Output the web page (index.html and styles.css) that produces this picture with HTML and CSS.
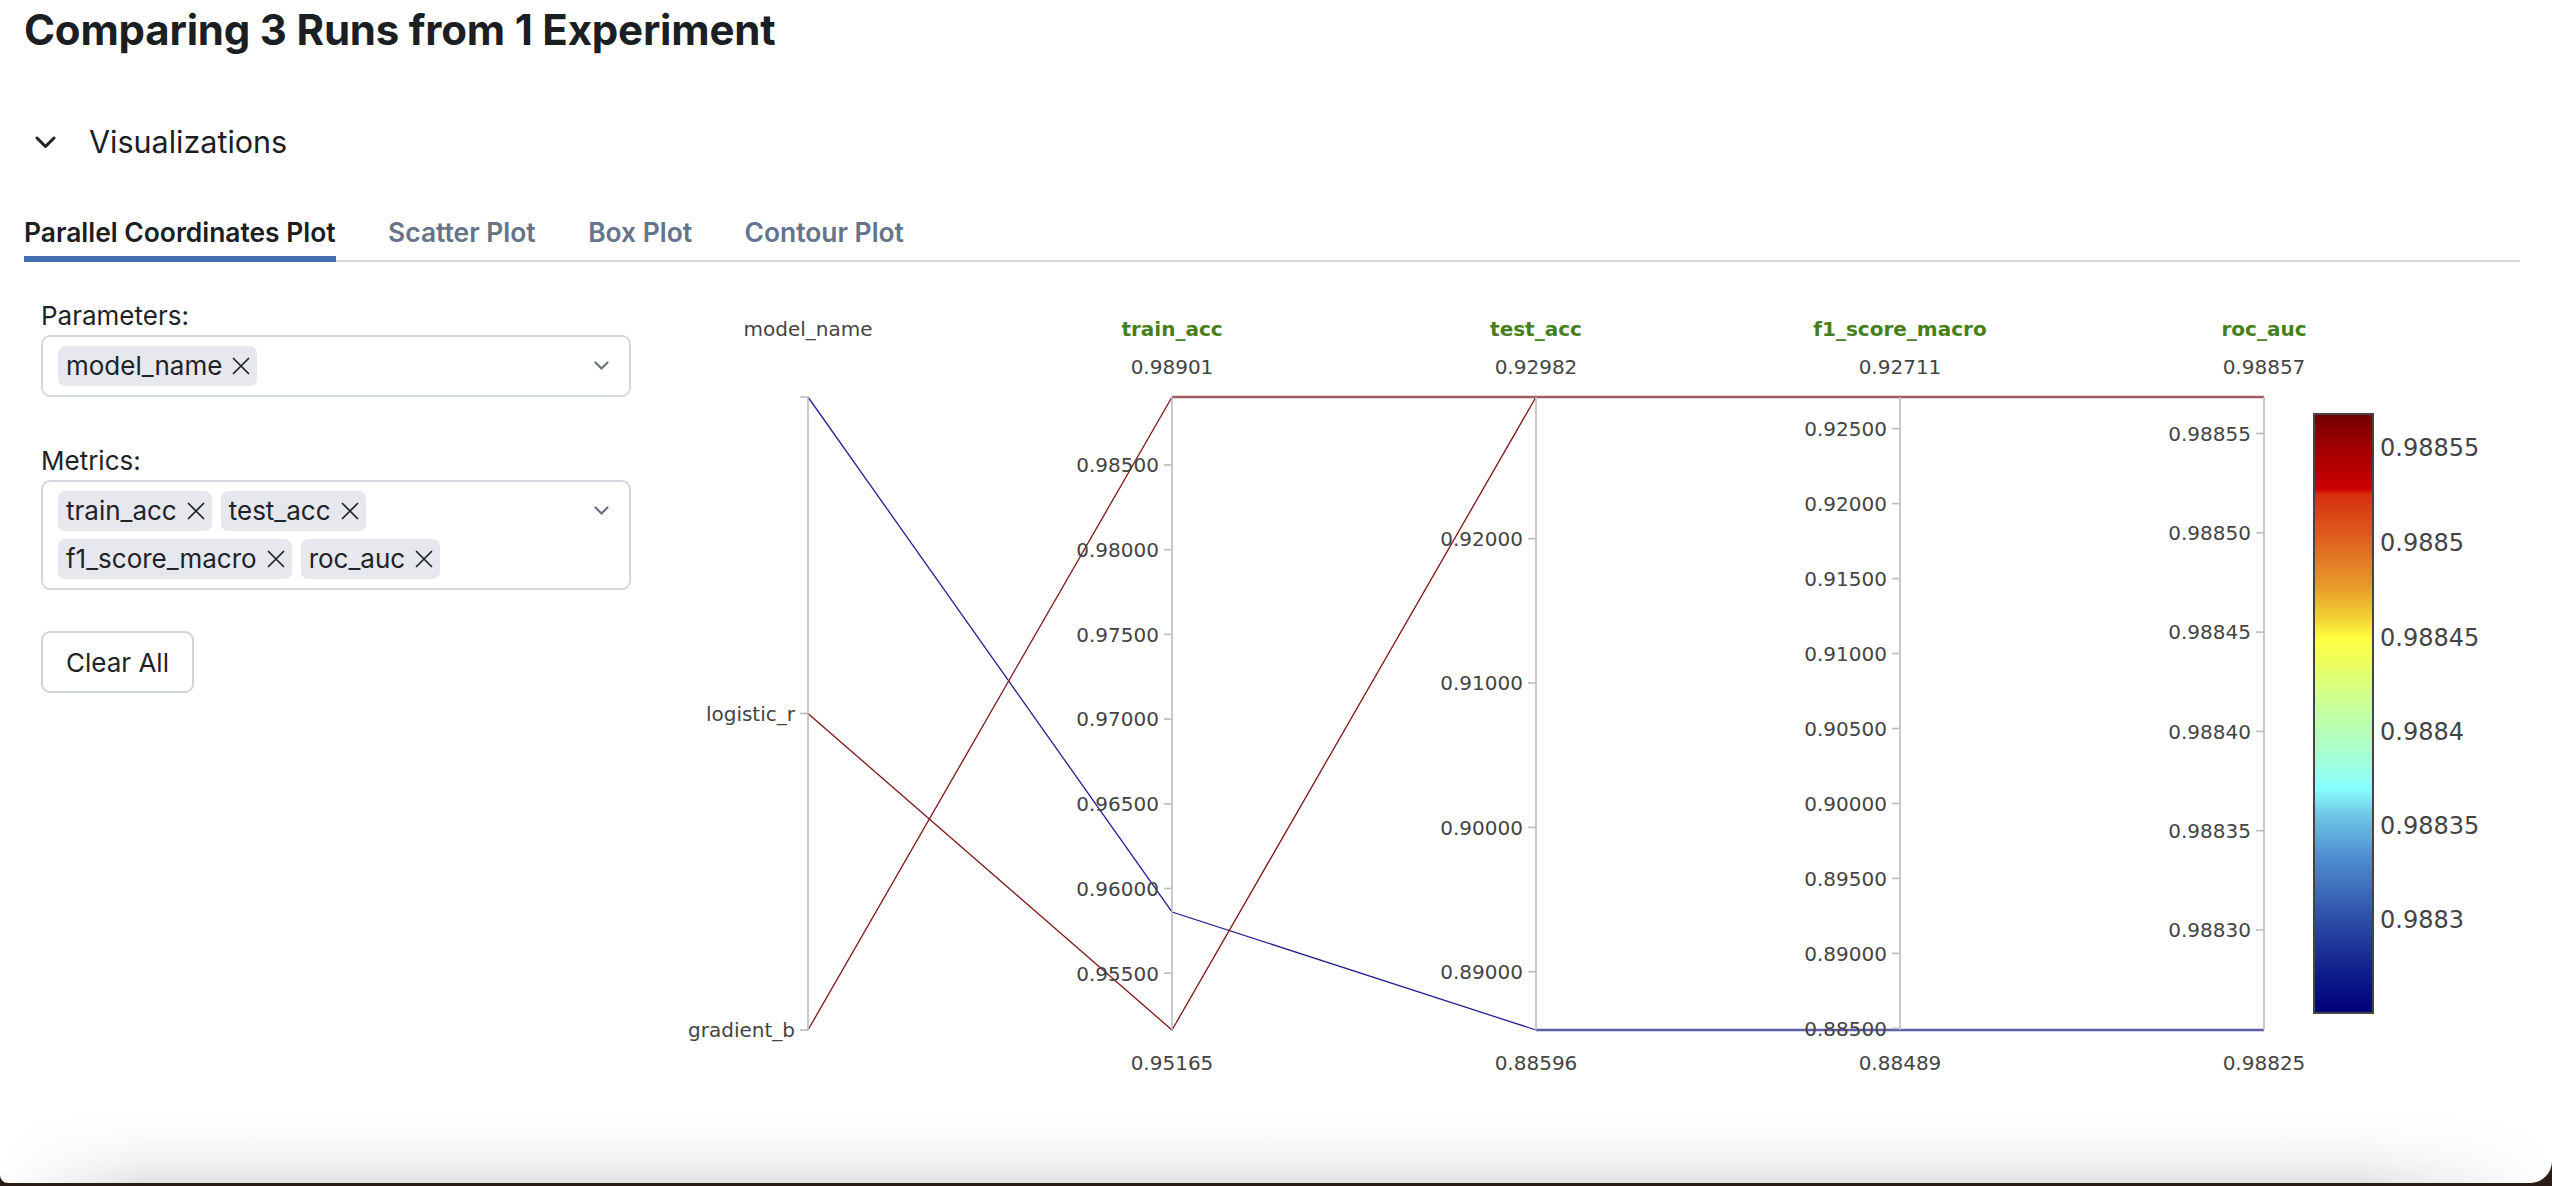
FILE: index.html
```html
<!DOCTYPE html>
<html lang="en">
<head>
<meta charset="utf-8">
<title>Comparing 3 Runs from 1 Experiment</title>
<link rel="stylesheet" href="styles.css">
</head>
<body>
<div class="window">
  <main class="page">
    <h1 class="title">Comparing 3 Runs from 1 Experiment</h1>

    <div class="section-toggle">
      <svg class="toggle-chevron" width="21" height="13" viewBox="0 0 21 13"><polyline points="2,2 10.5,10.5 19,2" fill="none" stroke="#1f2328" stroke-width="3" stroke-linecap="round" stroke-linejoin="round"/></svg>
      <span class="toggle-label">Visualizations</span>
    </div>

    <nav class="tabs">
      <div class="tab active">Parallel Coordinates Plot</div>
      <div class="tab">Scatter Plot</div>
      <div class="tab">Box Plot</div>
      <div class="tab">Contour Plot</div>
    </nav>

    <section class="tab-body">
      <div class="controls">
        <div class="field-label">Parameters:</div>
        <div class="select">
          <div class="chips">
            <span class="chip">model_name<svg class="chip-x" width="18" height="18" viewBox="0 0 18 18"><path d="M1.5 1.5L16.5 16.5M16.5 1.5L1.5 16.5" stroke="#1f2328" stroke-width="1.7" stroke-linecap="round"/></svg></span>
          </div>
          <div class="select-arrow"><svg width="15" height="9" viewBox="0 0 15 9"><polyline points="1.5,1.5 7.5,7.5 13.5,1.5" fill="none" stroke="#6b7280" stroke-width="2.2" stroke-linecap="round" stroke-linejoin="round"/></svg></div>
        </div>

        <div class="field-label second">Metrics:</div>
        <div class="select">
          <div class="chips">
            <span class="chip">train_acc<svg class="chip-x" width="18" height="18" viewBox="0 0 18 18"><path d="M1.5 1.5L16.5 16.5M16.5 1.5L1.5 16.5" stroke="#1f2328" stroke-width="1.7" stroke-linecap="round"/></svg></span>
            <span class="chip">test_acc<svg class="chip-x" width="18" height="18" viewBox="0 0 18 18"><path d="M1.5 1.5L16.5 16.5M16.5 1.5L1.5 16.5" stroke="#1f2328" stroke-width="1.7" stroke-linecap="round"/></svg></span>
            <span class="chip">f1_score_macro<svg class="chip-x" width="18" height="18" viewBox="0 0 18 18"><path d="M1.5 1.5L16.5 16.5M16.5 1.5L1.5 16.5" stroke="#1f2328" stroke-width="1.7" stroke-linecap="round"/></svg></span>
            <span class="chip">roc_auc<svg class="chip-x" width="18" height="18" viewBox="0 0 18 18"><path d="M1.5 1.5L16.5 16.5M16.5 1.5L1.5 16.5" stroke="#1f2328" stroke-width="1.7" stroke-linecap="round"/></svg></span>
          </div>
          <div class="select-arrow"><svg width="15" height="9" viewBox="0 0 15 9"><polyline points="1.5,1.5 7.5,7.5 13.5,1.5" fill="none" stroke="#6b7280" stroke-width="2.2" stroke-linecap="round" stroke-linejoin="round"/></svg></div>
        </div>

        <button class="clear-btn" type="button">Clear All</button>
      </div>

      <svg class="plot" width="1870" height="820" viewBox="650 280 1870 820">
        <defs>
          <linearGradient id="jet" x1="0" y1="0" x2="0" y2="1">
            <stop offset="0" stop-color="#700000"/>
            <stop offset="0.05" stop-color="#9c0000"/>
            <stop offset="0.125" stop-color="#cc0000"/>
            <stop offset="0.135" stop-color="#d6300e"/>
            <stop offset="0.2" stop-color="#de5a1e"/>
            <stop offset="0.28" stop-color="#e6942a"/>
            <stop offset="0.34" stop-color="#f2d032"/>
            <stop offset="0.375" stop-color="#ffff40"/>
            <stop offset="0.44" stop-color="#e0ff74"/>
            <stop offset="0.5" stop-color="#c4ffa4"/>
            <stop offset="0.56" stop-color="#aaffcc"/>
            <stop offset="0.625" stop-color="#88ffff"/>
            <stop offset="0.67" stop-color="#6ec6e6"/>
            <stop offset="0.74" stop-color="#4e8ed0"/>
            <stop offset="0.84" stop-color="#2f4fa8"/>
            <stop offset="0.94" stop-color="#0c1a88"/>
            <stop offset="1" stop-color="#000078"/>
          </linearGradient>
        </defs>

        <g class="lines" fill="none">
          <polyline class="ln-blue" points="808,397 1172,912 1536,1030"/>
          <line class="ln-blue-h" x1="1536" y1="1030" x2="2264" y2="1030"/>
          <polyline class="ln-red" points="808,713.5 1172,1030 1536,397"/>
          <polyline class="ln-red" points="808,1030 1172,397"/>
          <line class="ln-red-h" x1="1172" y1="397" x2="2264" y2="397"/>
        </g>

        <g class="axes">
          <line x1="808" y1="397" x2="808" y2="1030"/>
          <line x1="1172" y1="397" x2="1172" y2="1030"/>
          <line x1="1536" y1="397" x2="1536" y2="1030"/>
          <line x1="1900" y1="397" x2="1900" y2="1030"/>
          <line x1="2264" y1="397" x2="2264" y2="1030"/>
          <line x1="800" y1="397" x2="808" y2="397"/>
          <line x1="800" y1="713.5" x2="808" y2="713.5"/>
          <line x1="800" y1="1030" x2="808" y2="1030"/>
          <line x1="1164" y1="465" x2="1172" y2="465"/>
          <line x1="1164" y1="549.7" x2="1172" y2="549.7"/>
          <line x1="1164" y1="634.4" x2="1172" y2="634.4"/>
          <line x1="1164" y1="719.1" x2="1172" y2="719.1"/>
          <line x1="1164" y1="803.8" x2="1172" y2="803.8"/>
          <line x1="1164" y1="888.5" x2="1172" y2="888.5"/>
          <line x1="1164" y1="973.2" x2="1172" y2="973.2"/>
          <line x1="1528" y1="538.7" x2="1536" y2="538.7"/>
          <line x1="1528" y1="683" x2="1536" y2="683"/>
          <line x1="1528" y1="827.4" x2="1536" y2="827.4"/>
          <line x1="1528" y1="971.7" x2="1536" y2="971.7"/>
          <line x1="1892" y1="428.6" x2="1900" y2="428.6"/>
          <line x1="1892" y1="503.6" x2="1900" y2="503.6"/>
          <line x1="1892" y1="578.6" x2="1900" y2="578.6"/>
          <line x1="1892" y1="653.5" x2="1900" y2="653.5"/>
          <line x1="1892" y1="728.5" x2="1900" y2="728.5"/>
          <line x1="1892" y1="803.5" x2="1900" y2="803.5"/>
          <line x1="1892" y1="878.4" x2="1900" y2="878.4"/>
          <line x1="1892" y1="953.4" x2="1900" y2="953.4"/>
          <line x1="1892" y1="1028.4" x2="1900" y2="1028.4"/>
          <line x1="2256" y1="433.5" x2="2264" y2="433.5"/>
          <line x1="2256" y1="532.8" x2="2264" y2="532.8"/>
          <line x1="2256" y1="632.1" x2="2264" y2="632.1"/>
          <line x1="2256" y1="731.4" x2="2264" y2="731.4"/>
          <line x1="2256" y1="830.7" x2="2264" y2="830.7"/>
          <line x1="2256" y1="930" x2="2264" y2="930"/>
        </g>

        <g class="axis-title">
          <text class="dim-title" x="808" y="336">model_name</text>
          <text class="metric-title" x="1172" y="336">train_acc</text>
          <text class="metric-title" x="1536" y="336">test_acc</text>
          <text class="metric-title" x="1900" y="336">f1_score_macro</text>
          <text class="metric-title" x="2264" y="336">roc_auc</text>
        </g>

        <g class="range-label">
          <text x="1172" y="374">0.98901</text>
          <text x="1536" y="374">0.92982</text>
          <text x="1900" y="374">0.92711</text>
          <text x="2264" y="374">0.98857</text>
          <text x="1172" y="1070">0.95165</text>
          <text x="1536" y="1070">0.88596</text>
          <text x="1900" y="1070">0.88489</text>
          <text x="2264" y="1070">0.98825</text>
        </g>

        <g class="tick-label">
          <text x="795" y="720.8">logistic_r</text>
          <text x="795" y="1037.3">gradient_b</text>

          <text x="1159" y="472.3">0.98500</text>
          <text x="1159" y="557">0.98000</text>
          <text x="1159" y="641.7">0.97500</text>
          <text x="1159" y="726.4">0.97000</text>
          <text x="1159" y="811.1">0.96500</text>
          <text x="1159" y="895.8">0.96000</text>
          <text x="1159" y="980.5">0.95500</text>

          <text x="1523" y="546">0.92000</text>
          <text x="1523" y="690.3">0.91000</text>
          <text x="1523" y="834.7">0.90000</text>
          <text x="1523" y="979">0.89000</text>

          <text x="1887" y="435.9">0.92500</text>
          <text x="1887" y="510.9">0.92000</text>
          <text x="1887" y="585.9">0.91500</text>
          <text x="1887" y="660.8">0.91000</text>
          <text x="1887" y="735.8">0.90500</text>
          <text x="1887" y="810.8">0.90000</text>
          <text x="1887" y="885.7">0.89500</text>
          <text x="1887" y="960.7">0.89000</text>
          <text x="1887" y="1035.7">0.88500</text>

          <text x="2251" y="440.8">0.98855</text>
          <text x="2251" y="540.1">0.98850</text>
          <text x="2251" y="639.4">0.98845</text>
          <text x="2251" y="738.7">0.98840</text>
          <text x="2251" y="838">0.98835</text>
          <text x="2251" y="937.3">0.98830</text>
        </g>

        <rect class="colorbar" x="2314" y="414" width="59" height="599" fill="url(#jet)"/>
        <g class="cbar-label">
          <text x="2380" y="455.8">0.98855</text>
          <text x="2380" y="550.8">0.9885</text>
          <text x="2380" y="645.5">0.98845</text>
          <text x="2380" y="740.2">0.9884</text>
          <text x="2380" y="833.8">0.98835</text>
          <text x="2380" y="927.5">0.9883</text>
        </g>
      </svg>
    </section>
  </main>
  <div class="fade"></div>
</div>
</body>
</html>
```

FILE: styles.css
```css
* { box-sizing: border-box; }

html, body {
  margin: 0;
  padding: 0;
}

body {
  background: #2a1d15;
  height: 1186px;
  overflow: hidden;
  font-family: Inter, "Liberation Sans", sans-serif;
  color: #1f2328;
}

.window {
  height: 1183px;
  background: #ffffff;
  border-radius: 0 0 22px 8px;
  overflow: hidden;
  display: flex;
  flex-direction: column;
}

.page {
  flex: 1;
  padding: 5px 32px 0 24px;
}

.title {
  margin: 0;
  font-size: 42px;
  line-height: 50px;
  font-weight: 700;
  color: #1b1f24;
  letter-spacing: -0.2px;
}

.section-toggle {
  margin-top: 67px;
  height: 40px;
  display: flex;
  align-items: center;
}

.toggle-chevron {
  margin-left: 11px;
  margin-right: 33px;
  display: block;
}

.toggle-label {
  font-size: 30.5px;
  line-height: 40px;
  color: #1b1f24;
}

.tabs {
  margin-top: 53.5px;
  display: flex;
  gap: 52.5px;
  border-bottom: 2px solid #d3d7de;
}

.tab {
  font-size: 26.4px;
  line-height: 32px;
  font-weight: 600;
  color: #64748b;
  padding-bottom: 8.5px;
  border-bottom: 6px solid transparent;
  margin-bottom: -2px;
}

.tab.active {
  color: #1b1f24;
  border-bottom-color: #4470b4;
}

.tab-body {
  display: flex;
  align-items: flex-start;
  padding-left: 17px;
}

.controls {
  width: 590px;
  flex-shrink: 0;
  padding-top: 37.5px;
}

.field-label {
  font-size: 26px;
  line-height: 32px;
  color: #1f2328;
  margin-bottom: 3px;
}

.field-label.second {
  margin-top: 48px;
}

.select {
  display: flex;
  align-items: flex-start;
  border: 2px solid #d3d7de;
  border-radius: 9px;
  padding: 9px 20px 9px 15px;
}

.chips {
  flex: 1;
  display: flex;
  flex-wrap: wrap;
  gap: 8px 9px;
  padding-right: 30px;
}

.chip {
  display: inline-flex;
  align-items: center;
  height: 40px;
  padding: 0 7px 0 8px;
  gap: 10px;
  border-radius: 7px;
  background: #e6e8ed;
  font-size: 26px;
  color: #1f2328;
  white-space: nowrap;
}

.chip-x {
  display: block;
}

.select-arrow {
  height: 40px;
  display: flex;
  align-items: center;
}

.select-arrow svg {
  display: block;
}

.clear-btn {
  margin-top: 41.5px;
  height: 62px;
  padding: 0 23px;
  border: 2px solid #cfd4dc;
  border-radius: 9px;
  background: #ffffff;
  font-family: Inter, "Liberation Sans", sans-serif;
  font-size: 26px;
  color: #1f2328;
}

.plot {
  display: block;
  margin-left: 19px;
  margin-top: 18px;
  flex-shrink: 0;
  font-family: "DejaVu Sans", Verdana, sans-serif;
}

.ln-red {
  stroke: #7f1717;
  stroke-width: 1.3;
}

.ln-blue {
  stroke: #22228e;
  stroke-width: 1.3;
}

.ln-red-h {
  stroke: #a05c62;
  stroke-width: 2.6;
}

.ln-blue-h {
  stroke: #5c5da8;
  stroke-width: 2.6;
}

.axes line {
  stroke: #bcbcbc;
  stroke-width: 1.6;
}

.axis-title text {
  font-size: 20px;
  text-anchor: middle;
}

.dim-title {
  fill: #444444;
}

.metric-title {
  fill: #46801c;
  font-weight: 700;
}

.range-label text {
  font-size: 20px;
  fill: #444444;
  text-anchor: middle;
}

.tick-label text {
  font-size: 20px;
  fill: #444444;
  text-anchor: end;
}

.colorbar {
  stroke: #444444;
  stroke-width: 2;
}

.cbar-label text {
  font-size: 24px;
  fill: #444444;
}

.fade {
  height: 78px;
  flex-shrink: 0;
  background: linear-gradient(to bottom, #ffffff 0%, #fcfcfc 35%, #f2f2f2 70%, #e2e2e2 100%);
  -webkit-mask-image: linear-gradient(to right, transparent 0, #000 150px, #000 calc(100% - 200px), transparent 100%);
  mask-image: linear-gradient(to right, transparent 0, #000 150px, #000 calc(100% - 200px), transparent 100%);
}
```
